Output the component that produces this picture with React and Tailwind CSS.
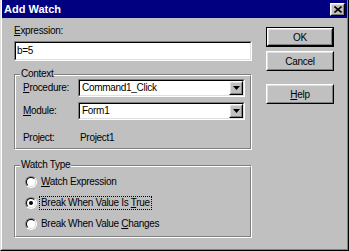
import React from "react";

const raisedOut = "border border-t-white border-l-white border-r-black border-b-black";
const raisedIn = "border border-t-[#dfdfdf] border-l-[#dfdfdf] border-r-[#808080] border-b-[#808080]";
const sunkOut = "border border-t-[#808080] border-l-[#808080] border-r-white border-b-white";
const sunkIn = "border border-t-black border-l-black border-r-[#dfdfdf] border-b-[#dfdfdf]";

function Key({ children }) {
  return <span className="underline underline-offset-[1px]">{children}</span>;
}

function Button({ children, isDefault }) {
  const face = (
    <div className={`${raisedOut} h-full w-full`}>
      <div className={`${raisedIn} h-full w-full flex items-center justify-center`}>{children}</div>
    </div>
  );
  if (isDefault) {
    return <div className="h-[20px] w-[68px] border border-black">{face}</div>;
  }
  return <div className="h-[20px] w-[68px]">{face}</div>;
}

function Combo({ value }) {
  return (
    <div className={`${sunkOut} w-[167px] h-[18px]`}>
      <div className={`${sunkIn} h-full bg-white flex items-center justify-between`}>
        <span className="pl-[2px] leading-[12px]">{value}</span>
        <div className={`${raisedOut} w-[14px] h-[14px]`}>
          <div className={`${raisedIn} h-full w-full bg-[#c0c0c0] flex items-center justify-center`}>
            <svg width="7" height="4" viewBox="0 0 7 4">
              <path d="M0 0H7L3.5 4Z" fill="#000" />
            </svg>
          </div>
        </div>
      </div>
    </div>
  );
}

function Group({ label, className, children }) {
  return (
    <div className={`relative border border-t-[#808080] border-l-[#808080] border-r-white border-b-white ${className}`}>
      <div className="h-full border border-t-white border-l-white border-r-[#808080] border-b-[#808080]">
        {children}
      </div>
      <span className="absolute left-[5px] top-[-7px] bg-[#c0c0c0] px-[1px] leading-[12px]">{label}</span>
    </div>
  );
}

function Radio({ checked, children }) {
  return (
    <div className="flex items-center h-[21px] pl-[9px] gap-[3px]">
      <div className="w-[12px] h-[12px] rounded-full border border-t-[#808080] border-l-[#808080] border-r-white border-b-white">
        <div className="h-full w-full rounded-full border border-t-black border-l-black border-r-[#dfdfdf] border-b-[#dfdfdf] bg-white flex items-center justify-center">
          {checked && <div className="w-[4px] h-[4px] rounded-full bg-black" />}
        </div>
      </div>
      {children}
    </div>
  );
}

export default function App() {
  return (
    <div
      className="w-[349px] h-[251px] bg-[#c0c0c0] border-l border-l-[#dfdfdf] border-r border-r-black border-b border-b-black text-black text-[10px] tracking-[-0.3px]"
      style={{ fontFamily: '"Liberation Sans", Arial, sans-serif' }}
    >
      <div className="h-full border-l border-l-white border-r border-r-[#808080] border-b border-b-[#808080] flex flex-col">
        {/* Title bar */}
        <div className="h-[18px] bg-[#000080] flex items-center justify-between pl-[2px] pr-[2px]">
          <span className="text-white font-bold text-[11px] tracking-normal leading-[14px]">Add Watch</span>
          <div className={`${raisedOut} w-[15px] h-[13px]`}>
            <div className={`${raisedIn} h-full w-full bg-[#c0c0c0] flex items-center justify-center`}>
              <svg width="8" height="7" viewBox="0 0 8 7">
                <path d="M0.5 0.5L7.5 6.5M7.5 0.5L0.5 6.5" stroke="#000" strokeWidth="1.6" />
              </svg>
            </div>
          </div>
        </div>

        <div className="flex">
          {/* Left column */}
          <div className="ml-[12px] w-[238px] flex flex-col">
            <div className="mt-[7px] leading-[12px]">
              <Key>E</Key>xpression:
            </div>
            <div className={`${sunkOut} mt-[4px] h-[20px]`}>
              <div className={`${sunkIn} h-full bg-white pl-[1px] pt-[2px] leading-[12px]`}>b=5</div>
            </div>

            <Group label="Context" className="mt-[13px] h-[76px]">
              <div className="flex flex-col pl-[7px] pt-[3px]">
                <div className="flex items-center">
                  <span className="w-[55px] leading-[12px]">
                    <Key>P</Key>rocedure:
                  </span>
                  <Combo value="Command1_Click" />
                </div>
                <div className="flex items-center mt-[5px]">
                  <span className="w-[55px] leading-[12px]">
                    <Key>M</Key>odule:
                  </span>
                  <Combo value="Form1" />
                </div>
                <div className="flex items-center mt-[12px] leading-[12px]">
                  <span className="w-[57px]">Project:</span>
                  <span>Project1</span>
                </div>
              </div>
            </Group>

            <Group label="Watch Type" className="mt-[15px] h-[73px]">
              <div className="flex flex-col pt-[4px]">
                <Radio>
                  <span className="px-[1px] leading-[12px]">
                    <Key>W</Key>atch Expression
                  </span>
                </Radio>
                <Radio checked>
                  <span className="px-[1px] leading-[12px] outline outline-1 outline-dotted outline-black">
                    Break When Value Is <Key>T</Key>rue
                  </span>
                </Radio>
                <Radio>
                  <span className="px-[1px] leading-[12px]">
                    Break When Value <Key>C</Key>hanges
                  </span>
                </Radio>
              </div>
            </Group>
          </div>

          {/* Right column */}
          <div className="ml-[14px] flex flex-col pt-[9px]">
            <Button isDefault>OK</Button>
            <div className="mt-[4px]">
              <Button>Cancel</Button>
            </div>
            <div className="mt-[13px]">
              <Button>
                <span>
                  <Key>H</Key>elp
                </span>
              </Button>
            </div>
          </div>
        </div>
      </div>
    </div>
  );
}
